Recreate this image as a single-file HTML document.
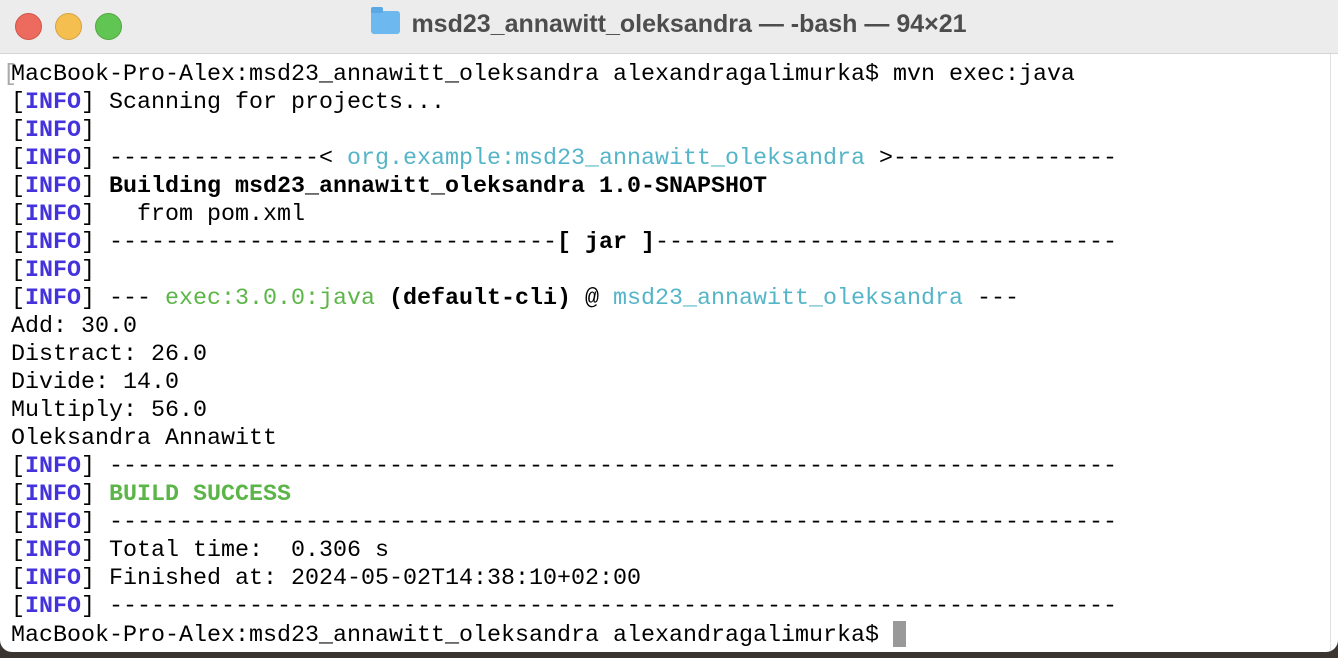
<!DOCTYPE html>
<html><head><meta charset="utf-8"><style>
html,body{margin:0;padding:0;width:1338px;height:658px;overflow:hidden;background:#3a3530;}
.win{position:absolute;left:0;top:0;width:1338px;height:652px;background:#fff;border-radius:0 0 12px 12px;overflow:hidden;}
.title{position:absolute;left:0;top:0;width:1338px;height:53px;background:#ececec;border-bottom:1px solid #d6d6d6;}
.dot{position:absolute;top:13px;width:25px;height:25px;border-radius:50%;}
.ttl{position:absolute;left:0;width:1338px;top:10px;text-align:center;font:bold 25px "Liberation Sans",sans-serif;color:#4d4d4d;}
.folder{display:inline-block;width:29px;height:23px;background:#6cb8ef;border-radius:3px;vertical-align:-2px;margin-right:11px;position:relative;}
.folder:before{content:"";position:absolute;left:0;top:-4px;width:12px;height:6px;background:#5aa8e4;border-radius:2px 2px 0 0;}
pre{position:absolute;left:11px;top:61px;margin:0;font:23.33px/28px "Liberation Mono",monospace;color:#000;}
.i{color:#4433dd;font-weight:bold}
.c{color:#55b5c8}.g{color:#5cb548}.gb{color:#5cb548;font-weight:bold}
b{font-weight:bold}
.cur{display:inline-block;width:13px;height:26px;background:#999;vertical-align:-6px;}
.sb{position:absolute;left:1330px;top:54px;width:1px;height:598px;background:#e0e0e0;}
</style></head><body><div class="win">
<div class="title">
<div class="dot" style="left:15px;background:#ed6a5e;border:1px solid #d05648"></div>
<div class="dot" style="left:55px;background:#f5bf4f;border:1px solid #d6a243"></div>
<div class="dot" style="left:95px;background:#61c554;border:1px solid #51a73f"></div>
<div class="ttl"><span class="folder"></span>msd23_annawitt_oleksandra — -bash — 94×21</div>
</div>
<div class="sb"></div>
<pre><span style="position:absolute;left:-8px;color:#aaa">[</span>MacBook-Pro-Alex:msd23_annawitt_oleksandra alexandragalimurka$ mvn exec:java
[<span class="i">INFO</span>] Scanning for projects...
[<span class="i">INFO</span>]
[<span class="i">INFO</span>] ---------------&lt; <span class="c">org.example:msd23_annawitt_oleksandra</span> &gt;----------------
[<span class="i">INFO</span>] <b>Building msd23_annawitt_oleksandra 1.0-SNAPSHOT</b>
[<span class="i">INFO</span>]   from pom.xml
[<span class="i">INFO</span>] --------------------------------<b>[ jar ]</b>---------------------------------
[<span class="i">INFO</span>]
[<span class="i">INFO</span>] --- <span class="g">exec:3.0.0:java</span> <b>(default-cli)</b> @ <span class="c">msd23_annawitt_oleksandra</span> ---
Add: 30.0
Distract: 26.0
Divide: 14.0
Multiply: 56.0
Oleksandra Annawitt
[<span class="i">INFO</span>] ------------------------------------------------------------------------
[<span class="i">INFO</span>] <span class="gb">BUILD SUCCESS</span>
[<span class="i">INFO</span>] ------------------------------------------------------------------------
[<span class="i">INFO</span>] Total time:  0.306 s
[<span class="i">INFO</span>] Finished at: 2024-05-02T14:38:10+02:00
[<span class="i">INFO</span>] ------------------------------------------------------------------------
MacBook-Pro-Alex:msd23_annawitt_oleksandra alexandragalimurka$ <span class="cur"></span></pre>
</div></body></html>
